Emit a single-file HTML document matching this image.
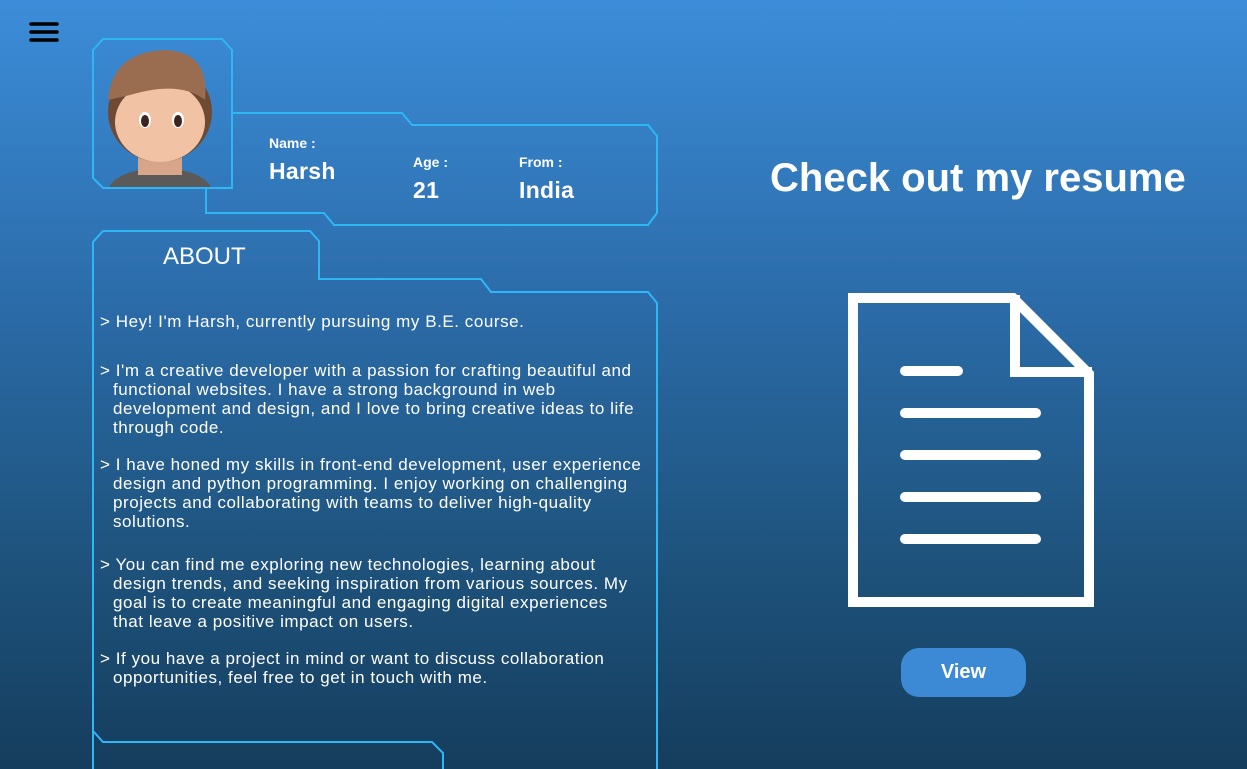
<!DOCTYPE html>
<html><head><style>
html,body{margin:0;padding:0;}
body{width:1247px;height:769px;overflow:hidden;position:relative;background:linear-gradient(180deg,#3c8dd9 0%,#2b6ba8 40%,#1f5580 70%,#153d5d 100%);font-family:"Liberation Sans",sans-serif;color:#fff;}
.abs{position:absolute;}
.lbl{font-weight:bold;font-size:14px;}
.val{font-weight:bold;font-size:23px;letter-spacing:0.3px;}
.about p{margin:0;position:absolute;left:100px;font-size:17px;line-height:19px;padding-left:13px;text-indent:-13px;white-space:nowrap;letter-spacing:0.55px;}
</style></head><body>
<svg class="abs" style="left:0;top:0" width="1247" height="769">
<defs><clipPath id="c"><path d="M103,39 L222,39 L232,50 L232,188 L103,188 L93,178 L93,50 Z"/></clipPath></defs>
<g clip-path="url(#c)">
<ellipse cx="160" cy="192" rx="52" ry="24" fill="#5c5a58"/>
<rect x="138" y="150" width="44" height="25" fill="#d7a58a"/>
<ellipse cx="160" cy="112" rx="52" ry="50" fill="#6e4a34"/>
<ellipse cx="160" cy="122" rx="45" ry="40" fill="#f1c3a4"/>
<path d="M108,100 Q112,52 165,50 Q210,52 205,100 Q180,80 130,95 Z" fill="#9b6d50"/>
<ellipse cx="145" cy="120" rx="6" ry="8" fill="#fff"/><ellipse cx="145" cy="121" rx="4" ry="6" fill="#3b2420"/>
<ellipse cx="178" cy="120" rx="6" ry="8" fill="#fff"/><ellipse cx="178" cy="121" rx="4" ry="6" fill="#3b2420"/>
</g>
<g fill="none" stroke="#2fb6f5" stroke-width="2">
<path d="M103,39 L222,39 L232,50 L232,188 L103,188 L93,178 L93,50 Z"/>
<path d="M232,113 L402,113 L412,125 L648,125 L657,136 L657,213 L648,225 L334,225 L324,213 L206,213 L206,188"/>
<path d="M93,780 L93,731 L103,742 L432,742 L443,753 L443,780 M93,731 L93,242 L103,231 L310,231 L319,241 L319,279 L481,279 L491,292 L648,292 L657,303 L657,780"/>
</g>
<g fill="none" stroke="#000" stroke-width="3.5" stroke-linecap="round"><path d="M31,24H57M31,32H57M31,40H57"/></g>
<g fill="none" stroke="#fff" stroke-width="10">
<path d="M853,298 H1013 L1089,374 V602 H853 Z"/>
<path d="M1015,295 V372 H1092"/>
</g>
<g stroke="#fff" stroke-width="10" stroke-linecap="round"><path d="M905,371H958M905,413H1036M905,455H1036M905,497H1036M905,539H1036"/></g>
</svg>
<div class="abs lbl" style="left:269px;top:135px">Name :</div>
<div class="abs val" style="left:269px;top:158px">Harsh</div>
<div class="abs lbl" style="left:413px;top:154px">Age :</div>
<div class="abs val" style="left:413px;top:177px">21</div>
<div class="abs lbl" style="left:519px;top:154px">From :</div>
<div class="abs val" style="left:519px;top:177px">India</div>
<div class="abs" style="left:163px;top:243px;font-size:24px">ABOUT</div>
<div class="about">
<p style="top:312px">&gt; Hey! I'm Harsh, currently pursuing my B.E. course.</p>
<p style="top:361px">&gt; I'm a creative developer with a passion for crafting beautiful and<br>functional websites. I have a strong background in web<br>development and design, and I love to bring creative ideas to life<br>through code.</p>
<p style="top:455px">&gt; I have honed my skills in front-end development, user experience<br>design and python programming. I enjoy working on challenging<br>projects and collaborating with teams to deliver high-quality<br>solutions.</p>
<p style="top:555px">&gt; You can find me exploring new technologies, learning about<br>design trends, and seeking inspiration from various sources. My<br>goal is to create meaningful and engaging digital experiences<br>that leave a positive impact on users.</p>
<p style="top:649px">&gt; If you have a project in mind or want to discuss collaboration<br>opportunities, feel free to get in touch with me.</p>
</div>
<div class="abs" style="left:770px;top:156px;font-size:40px;font-weight:bold;white-space:nowrap">Check out my resume</div>
<div class="abs" style="left:901px;top:648px;width:125px;height:49px;border-radius:18px;background:#3c8ad6;font-weight:bold;font-size:20px;line-height:49px;text-align:center">View</div>
</body></html>
